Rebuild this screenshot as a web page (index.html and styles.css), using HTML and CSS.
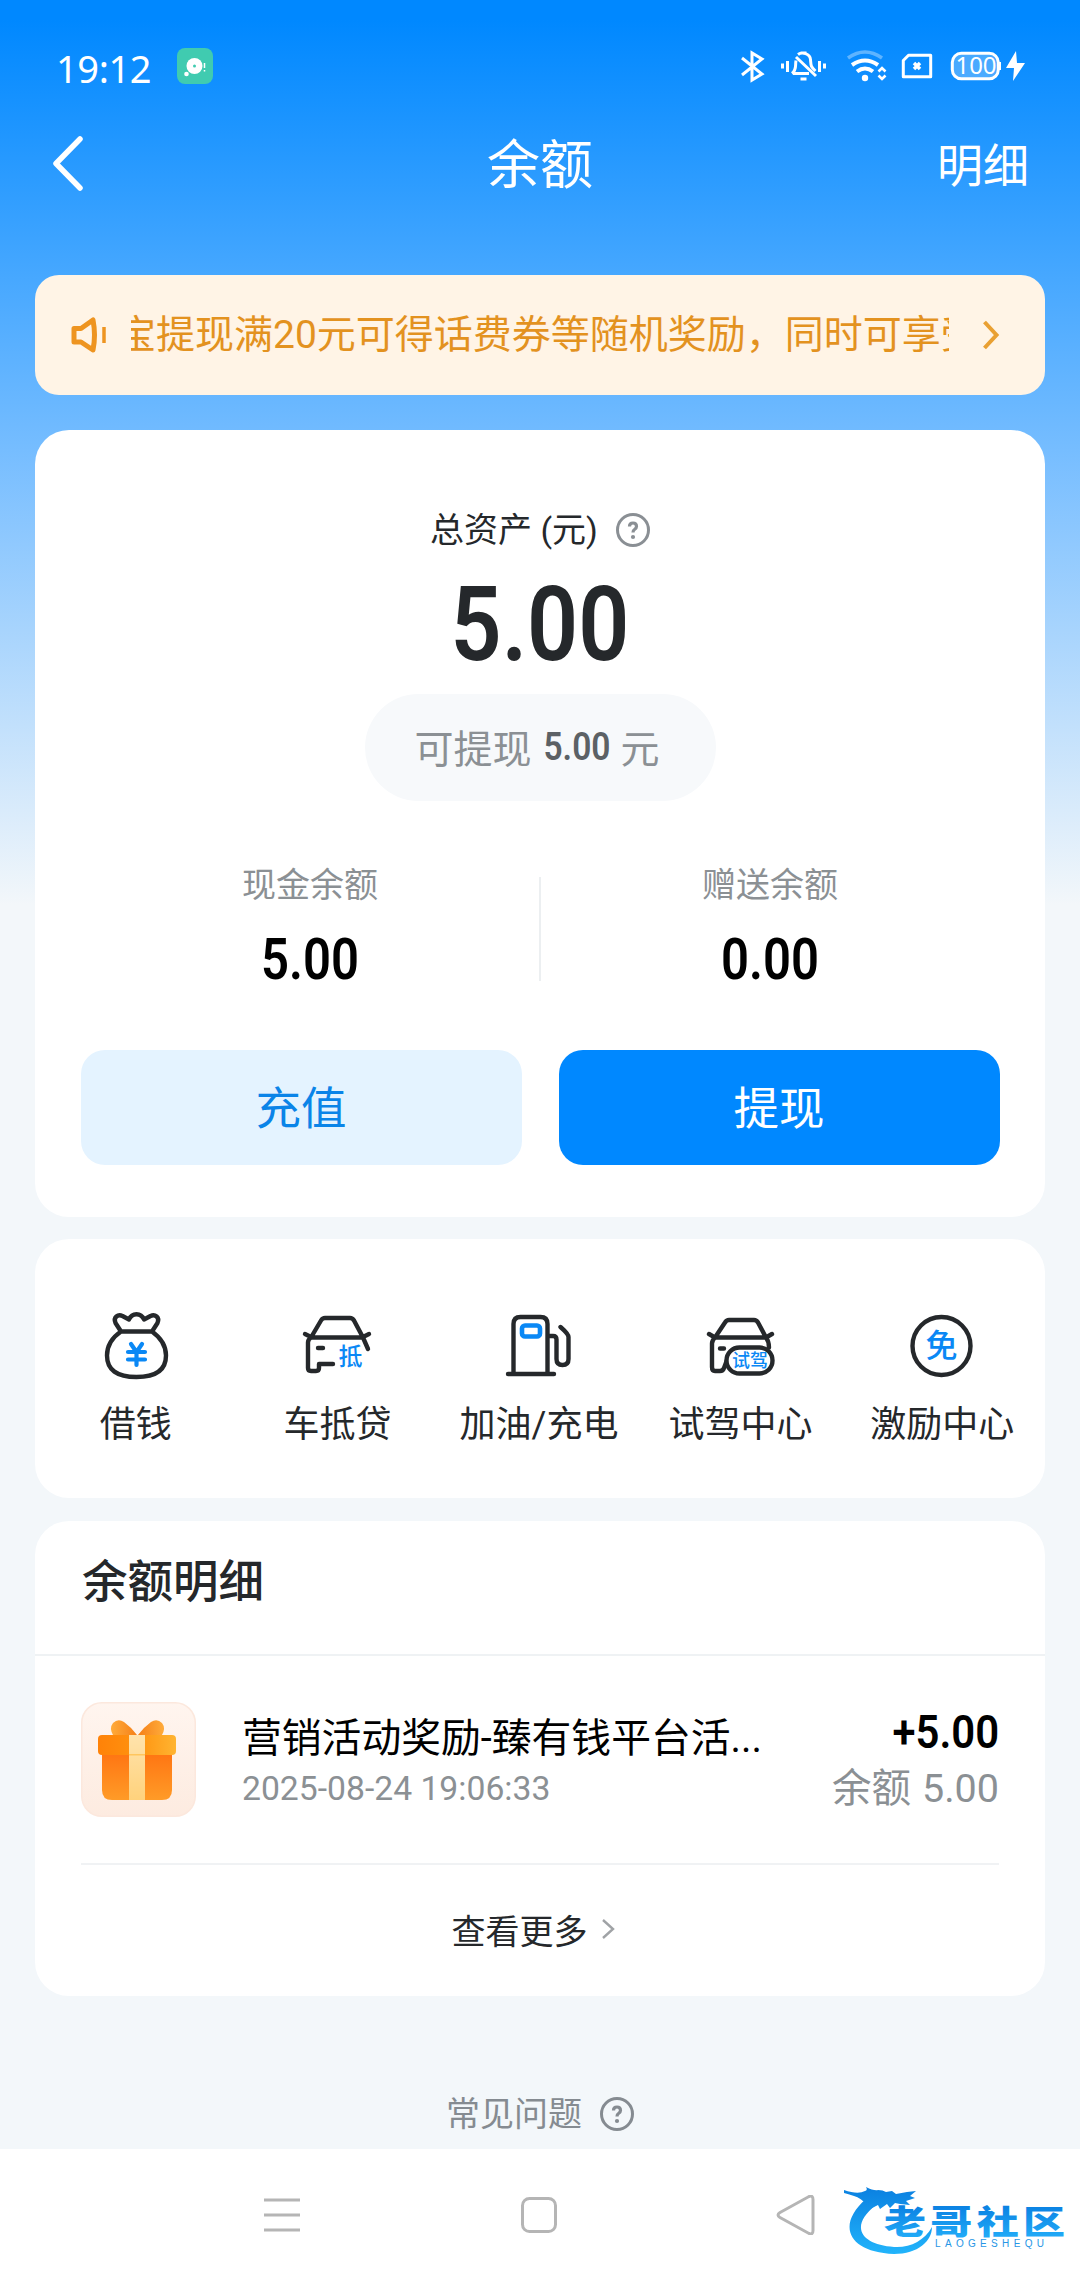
FILE: index.html
```html
<!DOCTYPE html>
<html lang="zh-CN">
<head>
<meta charset="utf-8">
<title>余额</title>
<link rel="stylesheet" href="styles.css">
</head>
<body>
<div class="page">
  <header class="status">
    <span class="clock">19:12</span>
    <svg class="app-dot" width="36" height="36" viewBox="0 0 36 36"><rect width="36" height="36" rx="8" fill="#40cbb0"/><circle cx="17.500" cy="18" r="8" fill="#fff"/><circle cx="17.500" cy="18" r="1.500" fill="#40cbb0"/><circle cx="9.500" cy="26" r="2.300" fill="#fff"/><path d="M27.500 15v5M27.500 22v1.500" stroke="#fff" stroke-width="1.500"/></svg>
    <svg class="status-icons" width="286" height="36" viewBox="740 48 286 36" fill="none" stroke="#fff" stroke-width="3">
      <path d="M742 58l20 16-10 6V53l10 6-20 16"/>
      <path d="M782.500 63.500v5M787.500 61v11M819.500 61v11M824.500 63.500v5"/>
      <path d="M796 57l20 19M793 73.500h16M796 60.500c-1 5 1 9-4 13M798 54.500c4-3 12-1 12.500 5 .5 6 0 7 5 11.500M800.500 53h6"/>
      <path d="M800.500 79h6" stroke-width="3"/>
      <path d="M848 58q17-12 34 0" stroke-opacity=".35" stroke-width="3.500"/>
      <path d="M852 65q13-9 26 0M857 71.500q8-6 16 0" stroke-width="4"/>
      <circle cx="865" cy="78" r="3.200" fill="#fff" stroke="none"/>
      <path d="M878.500 71.500l3.500-3.500 3.500 3.500M878.500 75.500l3.500 3.500 3.500-3.500" stroke-width="2.600"/>
      <path d="M908.500 55.300H930.700V76.700H903.300V60.500z" stroke-linejoin="round"/>
      <path d="M914 63l6 6M920 63l-6 6" stroke-width="3.500"/>
      <rect x="952.300" y="53.300" width="46" height="25.500" rx="9" fill="#fff" fill-opacity=".25"/>
      <path d="M999.500 62v8" stroke-width="3"/>
      <text x="976" y="73.500" class="battery-text" text-anchor="middle">100</text>
      <path d="M1016 51l-10 17h8l-1 13 12-18h-8z" fill="#fff" stroke="none"/>
    </svg>
  </header>
  <nav class="titlebar">
    <svg class="back" width="34" height="58" viewBox="0 0 34 58"><path d="M29 3L5 27.500 29 52" fill="none" stroke="#fff" stroke-width="5.500" stroke-linecap="round" stroke-linejoin="round"/></svg>
    <h1 class="title">余额</h1>
    <a class="detail-link">明细</a>
  </nav>

  <section class="notice">
    <svg width="36" height="38" viewBox="0 0 36 38" fill="none" stroke="#ee9420" stroke-width="5" stroke-linejoin="round"><path d="M3 12.500h7L22 4q3 15 0 30L10 26H3z"/><path d="M33 11v16" stroke-width="3.500"/></svg>
    <div class="marquee"><span class="marquee-text">宝提现满20元可得话费券等随机奖励，同时可享受</span></div>
    <svg width="18" height="32" viewBox="0 0 18 32" fill="none" stroke="#e9a033" stroke-width="4"><path d="M2.500 3l12 13-12 13"/></svg>
  </section>

  <section class="card assets">
    <div class="assets-label"><span>总资产 (元)</span>
      <svg width="34" height="34" viewBox="0 0 34 34" fill="none" stroke="#8a8f94"><circle cx="17" cy="17" r="15.500" stroke-width="3"/><path d="M13.500 13.500q0-3.500 3.500-3.500t3.500 3.500q0 1.700-2 3-1.500 1-1.500 3" stroke-width="3.200"/><circle cx="17" cy="24" r="2.100" fill="#8a8f94" stroke="none"/></svg>
    </div>
    <div class="total"><span class="din">5.00</span></div>
    <div class="pill"><span>可提现</span><b class="din pill-num">5.00</b><span>元</span></div>
    <div class="split">
      <div class="split-col"><span class="split-label">现金余额</span><span class="din split-num">5.00</span></div>
      <i class="split-line"></i>
      <div class="split-col"><span class="split-label">赠送余额</span><span class="din split-num">0.00</span></div>
    </div>
    <div class="buttons"><button class="btn btn-light">充值</button><button class="btn btn-primary">提现</button></div>
  </section>

  <section class="card services">
    <div class="service">
      <svg width="72" height="72" viewBox="0 0 72 72" class="line-icon"><path d="M21 21.500h31q14 10 14 24 0 21.500-29.500 21.500T7 45.500Q7 31 21 21.500L15.500 13C13 7 18 4 22.500 6l6.500 3.500C32 2.500 41 2.500 44 9.500L50.500 6c4.500-2 9.500 1 7 7L52 21.500"/><path class="blue-line" stroke-width="4.200" d="M31 34l5.500 8 5.500-8M28 42h17M28 49.500h17M36.500 42v13"/></svg>
      <span>借钱</span>
    </div>
    <div class="service">
      <svg width="72" height="72" viewBox="0 0 72 72" class="line-icon"><path d="M4 24l7 3.500h50L68 24M10 27.500l10-17q1.500-2.500 4-2.500h25q2.500 0 4 2.500l9 17L67 39M10 27.500q-3 2-3 5V58q0 3 3 3h5q3 0 3-3v-4h14M17 38h5"/><text x="37.500" y="54.500" class="glyph-s">抵</text></svg>
      <span>车抵贷</span>
    </div>
    <div class="service">
      <svg width="72" height="72" viewBox="0 0 72 72" class="line-icon"><path d="M10.500 63.500V14q0-7 7-7h20q7 0 7 7v49.500M5 64h46M44.500 26H50q3.500 0 3.500 3.500V49q0 6 6 6t6-6V27q0-3-8-10"/><rect class="blue-line" stroke-width="4.600" x="19" y="15.500" width="18" height="11" rx="3"/></svg>
      <span>加油/充电</span>
    </div>
    <div class="service">
      <svg width="72" height="72" viewBox="0 0 72 72" class="line-icon"><path d="M4 24l6 3.500h51L67 24M10 27.500l10-15q1.500-2.500 4-2.500h25q2.500 0 4 2.500l8 15q3 4 3 10M10 27.500q-3 3-3 6V57q0 4 3 4h5q3 0 4-3l3-8M15 38.500h4"/><rect x="21.500" y="37.500" width="46" height="26" rx="13" fill="#fff"/><text x="27" y="57" class="glyph-xs">试驾</text></svg>
      <span>试驾中心</span>
    </div>
    <div class="service">
      <svg width="72" height="72" viewBox="0 0 72 72" class="line-icon"><circle cx="35.500" cy="36" r="29"/><text x="35.500" y="47" text-anchor="middle" class="glyph-l">免</text></svg>
      <span>激励中心</span>
    </div>
  </section>

  <section class="card history">
    <h2 class="history-title">余额明细</h2>
    <div class="record">
      <svg class="gift" width="115" height="115" viewBox="0 0 115 115">
        <defs>
          <linearGradient id="tile" x1="0" y1="0" x2="0" y2="1"><stop offset="0" stop-color="#fff5ef"/><stop offset="1" stop-color="#fdebe0"/></linearGradient>
          <linearGradient id="box" x1="0" y1="0" x2="0" y2="1"><stop offset="0" stop-color="#ff7412"/><stop offset="1" stop-color="#ff9b27"/></linearGradient>
          <linearGradient id="lid" x1="0" y1="0" x2="1" y2="0"><stop offset="0" stop-color="#ff8208"/><stop offset=".5" stop-color="#ff920f"/><stop offset="1" stop-color="#ffb431"/></linearGradient>
          <linearGradient id="band" x1="0" y1="0" x2="0" y2="1"><stop offset="0" stop-color="#ffe3ac"/><stop offset="1" stop-color="#ffd27c"/></linearGradient>
          <linearGradient id="bow" x1="0" y1="0" x2="1" y2="0"><stop offset="0" stop-color="#ffab3a"/><stop offset=".5" stop-color="#f57f17"/><stop offset="1" stop-color="#ffab3a"/></linearGradient>
        </defs>
        <rect x=".75" y=".75" width="113.500" height="113.500" rx="20" fill="url(#tile)" stroke="#fce8dd" stroke-width="1.500"/>
        <path d="M56 33H32q-4-7 0-12 5-5 11-1 7 5 13 13zM57 33h24q4-7 0-12-5-5-11-1-7 5-13 13z" fill="url(#bow)"/>
        <path d="M21 50h70v38q0 10-10 10H31q-10 0-10-10z" fill="url(#box)"/>
        <rect x="17" y="33" width="78" height="20" rx="4" fill="url(#lid)"/>
        <rect x="48" y="33" width="16" height="65" fill="url(#band)"/><rect x="48" y="52" width="16" height="1.500" fill="#ffc65e"/>
      </svg>
      <div class="record-main"><div class="record-name">营销活动奖励-臻有钱平台活...</div><div class="record-date">2025-08-24 19:06:33</div></div>
      <div class="record-side"><div class="record-amount"><span class="din">+5.00</span></div><div class="record-balance"><span>余额</span><span class="balance-num">5.00</span></div></div>
    </div>
    <div class="more"><span>查看更多</span><svg width="16" height="24" viewBox="0 0 16 24" fill="none" stroke="#a0a3a6" stroke-width="2.400"><path d="M2 3l10 9-10 9"/></svg></div>
  </section>

  <div class="faq"><span>常见问题</span>
    <svg width="34" height="34" viewBox="0 0 34 34" fill="none" stroke="#858b91"><circle cx="17" cy="17" r="15.500" stroke-width="3"/><path d="M13.500 13.500q0-3.500 3.500-3.500t3.500 3.500q0 1.700-2 3-1.500 1-1.500 3" stroke-width="3.200"/><circle cx="17" cy="24" r="2.100" fill="#858b91" stroke="none"/></svg>
  </div>

  <footer class="sysnav">
    <svg width="40" height="40" viewBox="0 0 40 40"><path d="M2 5h36M2 20h36M2 35h36"/></svg>
    <svg width="40" height="40" viewBox="0 0 40 40"><rect x="3.500" y="3.500" width="33" height="33" rx="7"/></svg>
    <svg width="40" height="40" viewBox="0 0 40 40"><path d="M4 17.500L33 1.500q4-1.500 4 3v31q0 4.500-4 3L4 22.500q-4-2.500 0-5z"/></svg>
    <svg class="watermark" width="230" height="76" viewBox="838 2180 230 76">
      <defs>
        <linearGradient id="wm" gradientUnits="userSpaceOnUse" x1="0" y1="2185" x2="0" y2="2253"><stop offset="0" stop-color="#0a7fe0"/><stop offset="1" stop-color="#22b4fb"/></linearGradient>
        <linearGradient id="wmText" x1="0" y1="0" x2="0" y2="1"><stop offset=".2" stop-color="#0a80e2"/><stop offset=".9" stop-color="#22acf8"/></linearGradient>
      </defs>
      <path d="M864 2198C834 2224 846 2251 892 2253 916 2253 930 2240 930 2226 922 2240 908 2247 892 2246 860 2244 846 2226 874 2204z" fill="url(#wm)"/>
      <path d="M842 2189q14 5 21 1 3-1 1-4 8 4 12 3 5 0 8 2l6-1 4 3 11-2 9-1-6 5 5 2-9 3 4 4-10-1-5-1-5 5-3-4-7 5-2-4-12 6 1-6q-6-7-13-9-6-2-10-3z" fill="url(#wm)"/>
      <text transform="translate(0 2232.500) scale(1 .78)" x="882" y="0" textLength="181" lengthAdjust="spacing" class="wm-cn" fill="url(#wmText)">老哥社区</text>
      <text x="933" y="2246" textLength="109" class="wm-en">LAOGESHEQU</text>
    </svg>
  </footer>
</div>
</body>
</html>
```
FILE: styles.css
```css
* { box-sizing: border-box; }
body, h1, h2 { margin: 0; }
body { font-family: Roboto, "Noto Sans CJK SC", sans-serif; color: #25282b; }
svg { display: block; flex: none; }

.page {
  width: 1080px;
  height: 2280px;
  overflow: hidden;
  display: flex;
  flex-direction: column;
  background: linear-gradient(#0088ff 20px, #76bdff 450px, #f3f7fa 905px);
}

.status { height: 132px; padding: 0 54px 0 56px; display: flex; align-items: center; color: #fff; }
.clock { font: 400 38px/40px "Noto Sans", sans-serif; width: 94px; letter-spacing: -0.4px; margin-top: 3px; }
.app-dot { margin-left: 27px; }
.status-icons { margin-left: auto; }
.battery-text { font: 400 24px "Noto Sans", sans-serif; fill: #fff; stroke: none; }

.titlebar { height: 64px; padding: 0 51px; display: grid; grid-template-columns: 1fr auto 1fr; align-items: center; color: #fff; }
.title { font-weight: 400; font-size: 53px; line-height: 64px; padding-top: 2px; }
.detail-link { justify-self: end; font-size: 46px; line-height: 64px; padding-top: 2px; }

.notice {
  height: 120px;
  margin: 79px 35px 35px;
  padding: 0 45px 0 36px;
  border-radius: 24px;
  background: #fff4e6;
  color: #e3921f;
  display: flex;
  align-items: center;
}
.marquee { width: 818px; margin: 0 auto 0 24px; overflow: hidden; white-space: nowrap; font-size: 39px; line-height: 60px; }
.marquee-text { margin-left: -14px; }

.card { margin: 0 35px; border-radius: 34px; background: #fff; flex: none; }

.din { display: inline-block; font-weight: 600; transform: scaleX(.86); }

.assets { height: 787px; padding: 76px 46px 0; display: flex; flex-direction: column; align-items: center; }
.assets-label { display: flex; align-items: center; gap: 18px; font-size: 34px; line-height: 48px; }
.total { font-size: 104px; line-height: 120px; margin-top: 11px; }
.pill {
  width: 351px;
  height: 107px;
  margin-top: 9px;
  padding: 0 6px 4px 0;
  border-radius: 54px;
  background: #f7f9fb;
  color: #8b9094;
  display: flex;
  justify-content: center;
  align-items: center;
  font-size: 39px;
}
.pill-num { color: #5c6165; margin: 2px 5px 0 6px; }
.split { width: 918px; margin-top: 60px; display: flex; justify-content: space-between; align-items: center; }
.split-col { width: 458px; display: flex; flex-direction: column; align-items: center; }
.split-label { font-size: 34px; line-height: 48px; color: #8b9094; }
.split-num { font-size: 57px; line-height: 66px; margin-top: 18px; color: #000; }
.split-line { width: 2px; height: 104px; margin-top: 4px; background: #eceff1; }
.buttons { width: 919px; margin-top: 57px; display: flex; gap: 37px; }
.btn { flex: 1; height: 115px; border: 0; border-radius: 24px; padding: 0 0 5px; font: 400 45.5px/60px "Noto Sans CJK SC", sans-serif; }
.btn-light { background: #e4f3ff; color: #0a84e8; }
.btn-primary { background: #0088ff; color: #fff; }

.services { height: 259px; margin-top: 22px; padding: 71px 2px 0 0; display: grid; grid-template-columns: repeat(5, 1fr); }
.service { display: flex; flex-direction: column; align-items: center; font-size: 36px; line-height: 52px; gap: 17px; white-space: nowrap; margin: 0 -2px; }
.line-icon { fill: none; stroke: #25282b; stroke-width: 4.4px; stroke-linecap: round; stroke-linejoin: round; }
.blue-line { stroke: #0a88f5; }
.line-icon text { stroke: none; fill: #0a88f5; font-family: "Noto Sans CJK SC", sans-serif; font-weight: 500; }
.glyph-s { font-size: 24px; }
.glyph-xs { font-size: 18px; }
.glyph-l { font-size: 32px; }

.history { height: 475px; margin-top: 23px; }
.history-title { height: 135px; padding: 33px 47px 0; border-bottom: 2px solid #eff2f4; font-size: 45.5px; line-height: 58px; font-weight: 500; }
.record { height: 209px; margin: 0 46px; padding-top: 46px; display: flex; border-bottom: 2px solid #f0f2f4; color: #000; }
.record-main { margin-left: 46px; }
.record-name { font-size: 39.8px; line-height: 60px; margin-top: 7px; white-space: nowrap; }
.record-date { font-size: 33.7px; line-height: 40px; color: #8b9094; }
.record-side { margin-left: auto; display: flex; flex-direction: column; align-items: flex-end; }
.record-amount { font-size: 46px; line-height: 60px; }
.record-amount .din { transform: scaleX(.91); transform-origin: right; }
.record-balance { display: flex; gap: 11px; margin-top: 1px; font-size: 39.5px; line-height: 52px; color: #8b9094; }
.more { height: 131px; padding: 0 12px 3px 0; display: flex; justify-content: center; align-items: center; gap: 13px; font-size: 34px; }

.faq { height: 153px; padding-top: 94px; display: flex; justify-content: center; gap: 18px; font-size: 34px; line-height: 48px; color: #858b91; }
.faq svg { margin-top: 7px; }

.sysnav { position: relative; flex: 1; padding: 46px 264px 0 262px; display: flex; justify-content: space-between; background: #fff; }
.sysnav > svg:not(.watermark) { fill: none; stroke: #b5b5b5; stroke-width: 3px; }
.watermark { position: absolute; left: 840px; top: 32px; }
.wm-cn { font: 900 42px "Noto Sans CJK SC", sans-serif; }
.wm-en { font: 400 10px/1 "Liberation Sans", sans-serif; fill: #2796e5; }
```
